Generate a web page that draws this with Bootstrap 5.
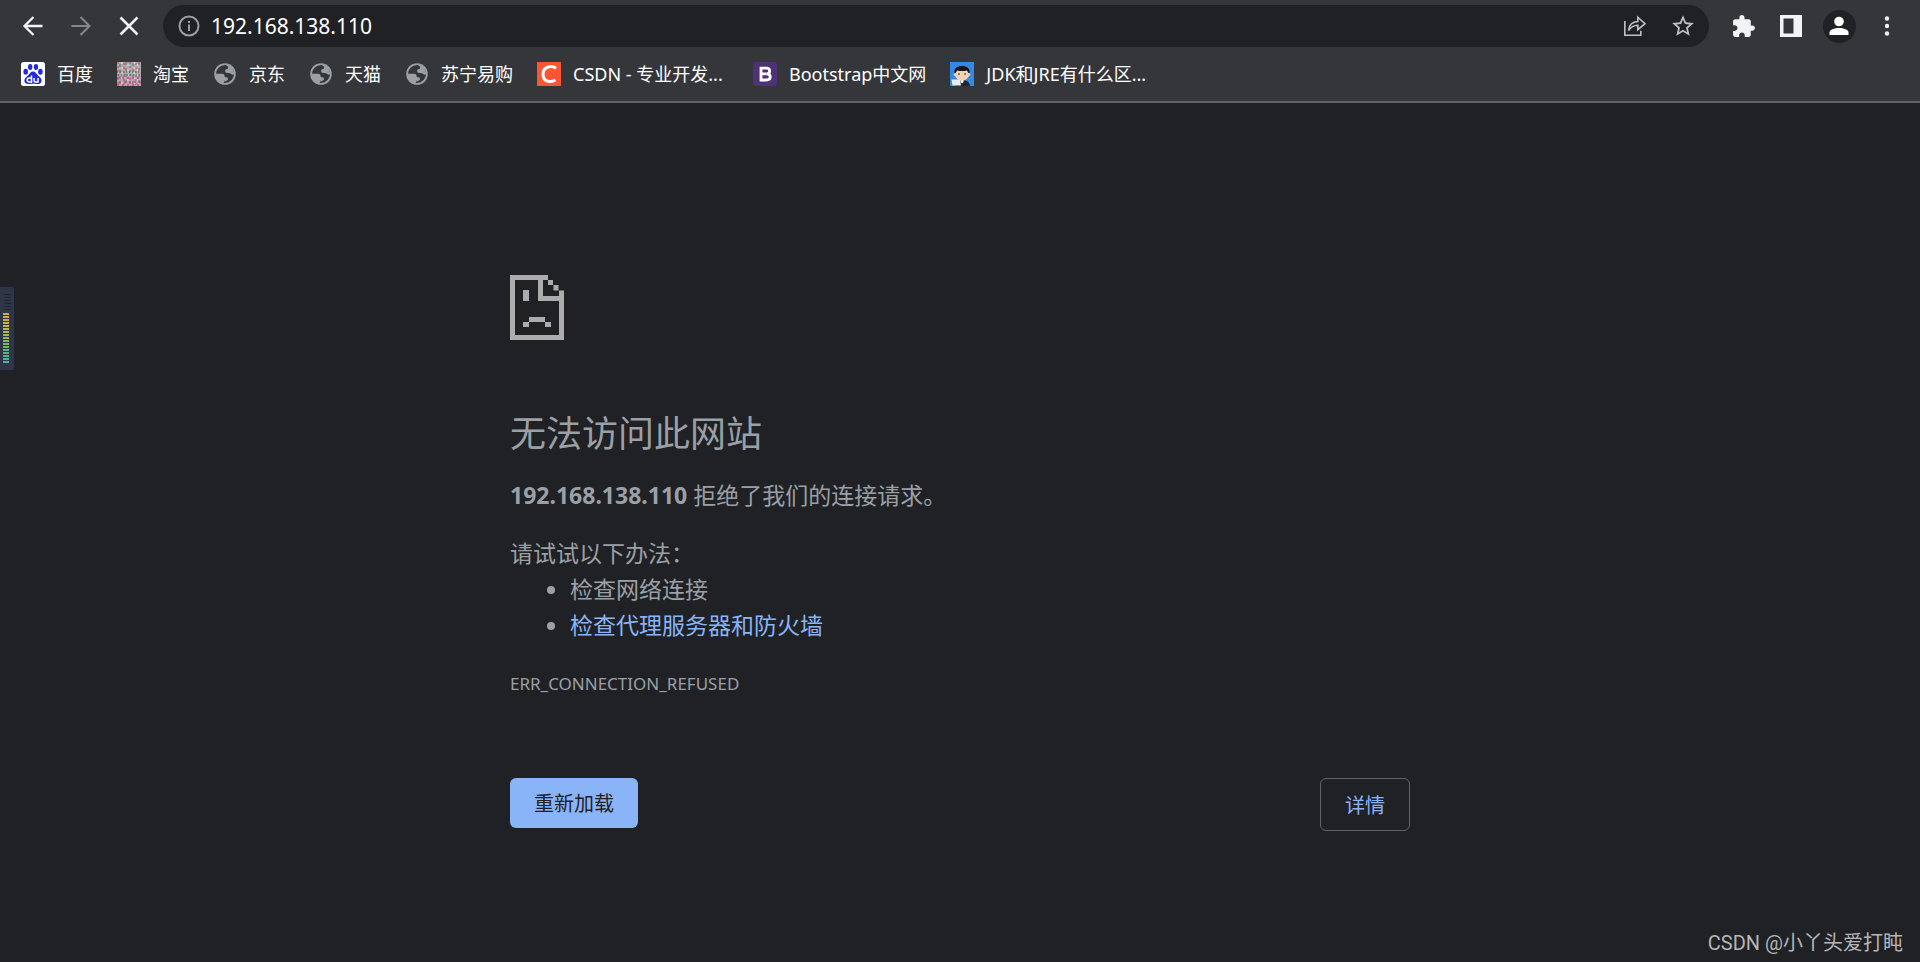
<!DOCTYPE html>
<html lang="zh-CN">
<head>
<meta charset="utf-8">
<meta name="viewport" content="width=device-width, initial-scale=1">
<title>192.168.138.110</title>
<link href="https://cdn.jsdelivr.net/npm/bootstrap@5.3.0/dist/css/bootstrap.min.css" rel="stylesheet">
<style>
  body { background: #202124; color: #9aa0a6; font-family: "Noto Sans", "Noto Sans CJK SC", sans-serif; }
  .browser-bar { background: #35363a; border-bottom: 2px solid #5f6368; }
  .tool-row { height: 52px; padding: 0 19px; gap: 20px; }
  .tool-btn { border: 0; background: none; padding: 0; width: 28px; height: 28px; display: flex; align-items: center; justify-content: center; color: #f1f3f4; flex: none; }
  .tool-btn:disabled { color: #87888b; }
  .omnibox { background: #202124; height: 42px; border-radius: 21px; padding: 0 12px; color: #bdc1c6; }
  .omnibox input { background: none; border: 0; outline: 0; color: #fff; font-size: 21px; line-height: 28px; padding: 0; min-width: 0; }
  .omnibox .tool-btn { color: #bdc1c6; }
  .profile { width: 33px; height: 33px; border-radius: 50%; background: #202124; }
  .bookmarks { height: 49px; padding: 0 21px 5px; gap: 24px; font-size: 18px; line-height: 24px; }
  .bookmarks a { color: #fff; gap: 12px; }
  .bookmarks svg { flex: none; }
  .long-label { min-width: 156px; }
  .error-page { max-width: 900px; padding-top: 172px; font-size: 23px; line-height: 36px; }
  .error-page h1 { font-size: 36px; line-height: 40px; margin: 74px 0 23px; font-weight: 400; color: inherit; }
  .error-page p { margin-bottom: 22px; }
  .error-page .tips-title { margin-bottom: 0; }
  .error-page ul { padding-left: 60px; margin-bottom: 27px; }
  .error-page a { color: #8ab4f8; }
  .error-code { font-size: 17px; line-height: 28px; margin-bottom: 80px; }
  .page-btn { font-size: 20px; line-height: 28px; border-radius: 6px; }
  .reload { background: #8ab4f8; color: #202124; padding: 12px 24px 10px; border: 0; }
  .details, .details:hover { color: #8ab4f8; border: 1px solid #5f6368; padding: 13px 24px 10px; }
  .meter { top: 285px; width: 16px; height: 87px; background: #2f3545; border-radius: 0 4px 4px 0; border: 2px solid #1c2232; border-left: 0; }
  .watermark { right: 17px; bottom: 5px; font-family: Roboto, "Noto Sans CJK SC", sans-serif; font-size: 20px; line-height: 28px; color: #b5b6b7; }
</style>
</head>
<body class="min-vh-100 position-relative">
<svg width="0" height="0" class="position-absolute" aria-hidden="true">
  <symbol id="globe" viewBox="0 0 24 24">
    <circle cx="12" cy="12" r="9.9" fill="none" stroke="#9aa0a6" stroke-width="1.8"/>
    <path fill="#9aa0a6" d="M12.500 2.500c4 .3 8.500 4 8.800 9.500-.8.800-2.300.9-3.200 0-1-.9-1.800-1.200-3.300-1.100-1.600.1-2.700-.6-2.700-2 0-1.200.6-1.800 1.800-1.900 1-.1 1.500-.8 1.200-1.800-.3-.9-1-1.600-2.600-2.700zM2.500 11.800h6.400c2 0 2.700.8 2.700 2.100 0 1 .5 1.400 1.600 1.400 1.500 0 2 .7 1.800 1.800-.3 1.600-1.300 2-3.200 2.100-.9.100-1.200.7-1.200 2.100-4.700-.8-8-4.500-8.100-9.500z"/>
  </symbol>
</svg>
<header class="browser-bar">
  <div class="tool-row d-flex align-items-center">
    <button class="tool-btn" aria-label="后退"><svg width="22" height="22" viewBox="0 0 22 22" fill="none" stroke="currentColor" stroke-width="2.300"><path d="M20.500 11H2.500M11.500 2L2.500 11l9 9"/></svg></button>
    <button class="tool-btn" aria-label="前进" disabled><svg width="22" height="22" viewBox="0 0 22 22" fill="none" stroke="currentColor" stroke-width="2"><path d="M1.500 11h18M10.500 2l9 9-9 9"/></svg></button>
    <button class="tool-btn" aria-label="停止"><svg width="20" height="20" viewBox="0 0 20 20" fill="none" stroke="currentColor" stroke-width="2.500"><path d="M1.500 1.500l17 17M18.500 1.500l-17 17"/></svg></button>
    <div class="omnibox d-flex align-items-center flex-grow-1">
      <button class="tool-btn" aria-label="网站信息"><svg width="22" height="22" viewBox="0 0 22 22"><circle cx="11" cy="11" r="9.500" fill="none" stroke="#9aa0a6" stroke-width="2"/><path fill="#9aa0a6" d="M10 9.500h2V16h-2zM10 6h2v2h-2z"/></svg></button>
      <input class="flex-grow-1 ms-2" type="text" aria-label="地址" value="192.168.138.110">
      <button class="tool-btn me-3" aria-label="分享"><svg width="24" height="22" viewBox="0 0 24 22" fill="none" stroke="currentColor" stroke-width="1.600"><path d="M1.800 6v14.200h16v-4.500"/><path d="M5.500 15.500c.5-5.500 4-8.700 9.300-9V2.200L22 8.700l-7.200 6v-4.400c-4.300.1-7 1.800-9.300 5.200z"/></svg></button>
      <button class="tool-btn ms-1" aria-label="收藏"><svg width="26" height="26" viewBox="0 0 24 24"><path fill="currentColor" d="M22 9.240l-7.190-.62L12 2 9.190 8.630 2 9.240l5.460 4.730L5.820 21 12 17.270 18.180 21l-1.630-7.030L22 9.240zM12 15.400l-3.760 2.270 1-4.280-3.320-2.880 4.380-.38L12 6.100l1.710 4.040 4.380.38-3.320 2.880 1 4.280L12 15.400z"/></svg></button>
    </div>
    <button class="tool-btn" aria-label="扩展程序"><svg width="25" height="25" viewBox="0 0 24 24"><path fill="currentColor" d="M20.500 11H19V7c0-1.100-.9-2-2-2h-4V3.500C13 2.120 11.880 1 10.500 1S8 2.120 8 3.500V5H4c-1.100 0-1.990.9-1.990 2v3.800H3.500c1.490 0 2.700 1.210 2.700 2.700s-1.210 2.700-2.700 2.700H2V20c0 1.100.9 2 2 2h3.800v-1.500c0-1.490 1.210-2.700 2.700-2.700 1.490 0 2.700 1.210 2.700 2.700V22H17c1.100 0 2-.9 2-2v-4h1.500c1.380 0 2.500-1.120 2.500-2.500S21.880 11 20.500 11z"/></svg></button>
    <button class="tool-btn" aria-label="侧边栏"><svg width="22" height="22" viewBox="0 0 22 22"><path fill="currentColor" fill-rule="evenodd" d="M0 0h22v22H0zM3.500 3.500v15h10v-15z"/></svg></button>
    <button class="tool-btn" aria-label="用户"><span class="profile d-flex flex-shrink-0 align-items-center justify-content-center"><svg width="20" height="20" viewBox="0 0 20 20" fill="#fff"><circle cx="10" cy="5.500" r="4.800"/><path d="M.5 19v-2.500c0-3 5-4.500 9.500-4.500s9.500 1.500 9.500 4.500V19z"/></svg></span></button>
    <button class="tool-btn" aria-label="菜单"><svg width="6" height="20" viewBox="0 0 6 20" fill="currentColor"><circle cx="3" cy="2.500" r="2.200"/><circle cx="3" cy="10" r="2.200"/><circle cx="3" cy="17.500" r="2.200"/></svg></button>
  </div>
  <nav class="bookmarks d-flex align-items-center text-nowrap" aria-label="书签">
    <a class="d-flex align-items-center text-decoration-none" href="#"><svg width="24" height="24" viewBox="0 0 24 24"><rect width="24" height="24" rx="2.500" fill="#fff"/><g fill="#2629d9"><ellipse cx="4.700" cy="9.800" rx="2.300" ry="3"/><ellipse cx="9.200" cy="5" rx="2.200" ry="3"/><ellipse cx="15" cy="5" rx="2.200" ry="3"/><ellipse cx="19.400" cy="9.800" rx="2.300" ry="3"/><path d="M12 9.500c2.400 0 3.200 2 5 3.900 2 1.900 4 3.200 3.600 5.600-.4 2.600-2.600 3.200-4.700 3-2.600-.3-5.200-.3-7.800 0-2.200.2-4.300-.5-4.700-3-.3-2.500 1.700-3.700 3.600-5.600 1.800-1.900 2.600-3.900 5-3.900z"/></g><path d="M10.500 13.500v6.500H8.200c-2.600 0-2.600-4 0-4h2.300M13 16v2.500c0 1 .5 1.500 1.500 1.500H17v-4" fill="none" stroke="#fff" stroke-width="1.500"/></svg>百度</a>
    <a class="d-flex align-items-center text-decoration-none" href="#"><svg width="24" height="24" viewBox="0 0 24 24"><rect width="24" height="24" fill="#b3a7aa"/><g fill="none" stroke-width="1.400"><path stroke="#c8643c" stroke-dasharray="2 2" d="M1 0v24M7 1v22M13 0v24M19 1v22"/><path stroke="#5b7f9c" stroke-dasharray="3 3" d="M3 2v20M9 0v24M16 1v23M22 0v24"/><path stroke="#d8d5d9" stroke-dasharray="2 3" d="M5 0v24M11 2v22M17.500 0v24M20.500 2v22"/><path stroke="#d5379c" stroke-dasharray="2 3" d="M0 16h24M2 20h22M0 23h24"/><path stroke="#4d7777" stroke-dasharray="1 2" d="M0 10h24M1 13h23"/></g></svg>淘宝</a>
    <a class="d-flex align-items-center text-decoration-none" href="#"><svg width="24" height="24"><use href="#globe"/></svg>京东</a>
    <a class="d-flex align-items-center text-decoration-none" href="#"><svg width="24" height="24"><use href="#globe"/></svg>天猫</a>
    <a class="d-flex align-items-center text-decoration-none" href="#"><svg width="24" height="24"><use href="#globe"/></svg>苏宁易购</a>
    <a class="d-flex align-items-center text-decoration-none" href="#"><svg width="24" height="24" viewBox="0 0 24 24"><rect width="24" height="24" fill="#fc5531"/><path d="M19 6.200c-4-2.700-12.800-2.500-13 6 0 8 8 8.500 12.500 5.800" fill="none" stroke="#fff" stroke-width="3"/></svg><span class="long-label">CSDN - 专业开发...</span></a>
    <a class="d-flex align-items-center text-decoration-none" href="#"><svg width="24" height="24" viewBox="0 0 24 24"><rect width="24" height="24" rx="3" fill="#4d3278"/><path d="M8 6.200h5.500c4.200 0 4.200 5.300.3 5.600 4.700.3 4.500 6.200-.3 6.200H8zM8 11.800h5.500" fill="none" stroke="#fff" stroke-width="2.800"/></svg>Bootstrap中文网</a>
    <a class="d-flex align-items-center text-decoration-none" href="#"><svg width="24" height="24" viewBox="0 0 24 24"><rect width="24" height="24" fill="#3489e5"/><path d="M5 24c0-4 3-6 7-6s8 2 8 6z" fill="#23242c"/><path d="M10.500 17h3v3l-1.500 1.500-1.500-1.500z" fill="#fff"/><circle cx="5" cy="12.500" r="1.400" fill="#f5d3b5"/><circle cx="19" cy="12.500" r="1.400" fill="#f5d3b5"/><ellipse cx="12" cy="12.300" rx="7" ry="6.300" fill="#f5d3b5"/><path d="M4.500 11.500C3.500 6.500 7 4 12 4s8.500 2.500 7.500 7.500C18 11 17.500 9.500 17 8.500c-3 .8-7 .8-10 0-.5 1-1 2.500-2.500 3z" fill="#17161a"/><path d="M8 12h2M14 12h2" stroke="#3b2a24"/><path d="M1.500 17.500h8.500l1 6H2.500z" fill="#e8edf2"/></svg><span class="long-label">JDK和JRE有什么区...</span></a>
  </nav>
</header>
<main class="error-page mx-auto">
  <svg class="d-block" width="54" height="65" viewBox="0 0 54 65" fill="#acacac" role="img" aria-label="错误"><path fill-rule="evenodd" d="M0 0h38v5h5v5h5.500v5.500H54V65H0zM5 5v55h44V26H28V5zM33 5v16h16v-5.500h-5.500V10H38V5z"/><path d="M13 15h6v11h-6zM19 42h16v5H19zM13 47h6v5h-6zM35 47h6v5h-6z"/></svg>
  <h1>无法访问此网站</h1>
  <p><strong>192.168.138.110</strong> 拒绝了我们的连接请求。</p>
  <p class="tips-title">请试试以下办法：</p>
  <ul>
    <li>检查网络连接</li>
    <li><a class="text-decoration-none" href="#">检查代理服务器和防火墙</a></li>
  </ul>
  <div class="error-code">ERR_CONNECTION_REFUSED</div>
  <div class="d-flex justify-content-between align-items-start">
    <button class="page-btn reload" type="button">重新加载</button>
    <button class="btn page-btn details" type="button">详情</button>
  </div>
</main>
<div class="meter position-absolute start-0" aria-hidden="true">
  <svg class="d-block" width="12" height="81" viewBox="0 0 12 81"><defs><linearGradient id="level" x1="0" y1="27" x2="0" y2="76" gradientUnits="userSpaceOnUse"><stop stop-color="#d9a441"/><stop offset=".3" stop-color="#b9bd45"/><stop offset=".7" stop-color="#67b26b"/><stop offset="1" stop-color="#3fb5a6"/></linearGradient></defs><path d="M7.500 7v18" stroke="#1e2330" stroke-width="6" stroke-dasharray="1 2"/><path d="M6 26v50" stroke="url(#level)" stroke-width="6" stroke-dasharray="2 1"/></svg>
</div>
<div class="watermark position-absolute text-nowrap">CSDN @小丫头爱打盹</div>
<script src="https://cdn.jsdelivr.net/npm/bootstrap@5.3.0/dist/js/bootstrap.bundle.min.js"></script>
</body>
</html>
